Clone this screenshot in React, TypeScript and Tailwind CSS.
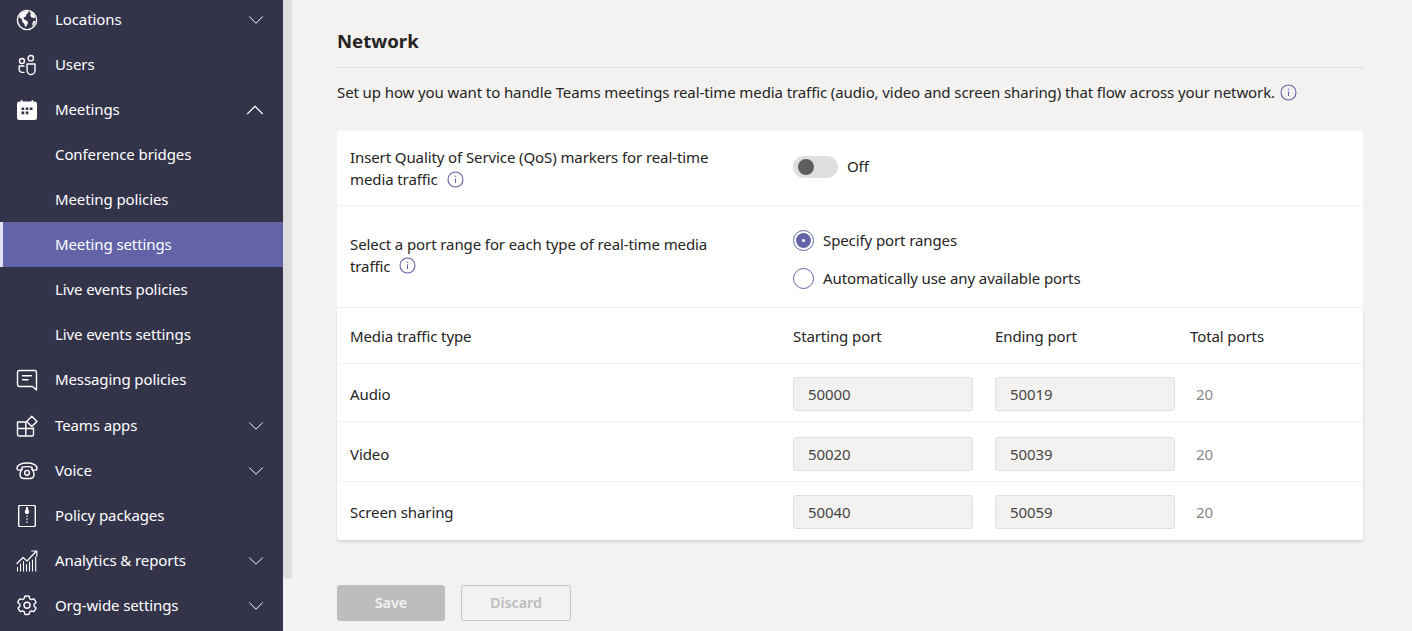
import { ChevronDown, ChevronUp } from 'lucide-react';
import type { ReactNode } from 'react';

const stroke = { fill: 'none', stroke: 'currentColor', strokeWidth: 1.4, strokeLinecap: 'round', strokeLinejoin: 'round' } as const;

function Svg({ children }: { children: ReactNode }) {
  return (
    <svg width="22" height="22" viewBox="0 0 22 22" className="text-white">
      {children}
    </svg>
  );
}

const GlobeIcon = () => (
  <Svg>
    <circle cx="11" cy="11" r="9.6" {...stroke} />
    <path fill="currentColor" d="M4 5.5c2-2.6 5-3.8 7.6-3.6l.8 1.6-2 1.9-.6 2.2-2.6 1.2 1.6 2.3 2.5.6.7 2.2-1.4 2.8-1.4 1.4-.8-3.2-2.2-2.2-.2-2.4L3 8.4Z" />
    <path fill="currentColor" d="M13.8 2.8c2.8.8 4.9 3 5.6 5.7l-1.8.6-2.4-.8-1-2.2.6-1.4Zm3.6 9.2 2-.2c-.4 2.4-1.6 4.2-3.2 5.4l.2-2.8Z" />
  </Svg>
);

const UsersIcon = () => (
  <Svg>
    <circle cx="14.8" cy="4.2" r="2.7" {...stroke} />
    <circle cx="6" cy="7" r="2.5" {...stroke} />
    <path {...stroke} d="M11 10h8v6.4a3.9 3.9 0 0 1-7.9.3Z" />
    <path {...stroke} d="M8 12H3.200v3.400a3 3 0 0 0 3 3H8" />
  </Svg>
);

const CalendarIcon = () => (
  <Svg>
    <path fill="currentColor" fillRule="evenodd" d="M3.500 2.500H5V1h1.400v1.500h9.200V1H17v1.500h1.500A2.500 2.500 0 0 1 21 5v13.500a2.500 2.500 0 0 1-2.500 2.500h-15A2.500 2.500 0 0 1 1 18.500V5a2.500 2.500 0 0 1 2.500-2.500ZM5.500 8.500v2.600h2.700V8.500Zm4.200 0v2.600h2.700V8.500Zm4.100 0v2.600h2.700V8.500ZM5.500 12.600v2.600h2.700v-2.600Zm4.200 0v2.600h2.700v-2.600Z" />
  </Svg>
);

const ChatIcon = () => (
  <Svg>
    <path {...stroke} d="M3.500 1.500h15a2 2 0 0 1 2 2v17.500l-4-3.500h-13a2 2 0 0 1-2-2v-12a2 2 0 0 1 2-2Z" />
    <path {...stroke} d="M6.500 6.800h9M6.500 10.800h5.500" />
  </Svg>
);

const AppsIcon = () => (
  <Svg>
    <path {...stroke} d="M1.500 7h8.300v14H3a1.500 1.500 0 0 1-1.500-1.500ZM1.500 13.500h16M9.800 21h6.200a1.500 1.500 0 0 0 1.500-1.500v-6.500" />
    <path {...stroke} d="M15.800 1.200 21 6.400l-5.200 5.200-5.200-5.200Z" />
  </Svg>
);

const PhoneIcon = () => (
  <Svg>
    <path {...stroke} d="M1 8.200C1 5 5.500 3 11 3s10 2 10 5.200c0 1.300-.7 1.900-1.700 1.900h-1.800c-1 0-1.600-.6-1.600-1.500V7.200c-1.500-.5-3.200-.6-4.900-.6s-3.400.1-4.900.6v1.400c0 .9-.6 1.500-1.600 1.500H2.700C1.700 10.100 1 9.500 1 8.200Z" />
    <path {...stroke} d="M6 9c-1.300 1.700-2 3.500-2 5.200C4 17 5.500 18.500 8 18.500h6c2.500 0 4-1.500 4-4.300 0-1.700-.7-3.500-2-5.200" />
    <circle cx="11" cy="12.800" r="2.400" {...stroke} />
  </Svg>
);

const PackageIcon = () => (
  <Svg>
    <rect x="2.700" y="0.200" width="16.600" height="21.600" rx="1.800" {...stroke} />
    <path fill="currentColor" d="M10 2h2v2.200c.8.800 1.200 1.600 1.200 2.500 0 1.400-.9 2.300-2.200 2.300s-2.200-.9-2.200-2.300c0-.9.400-1.700 1.200-2.500Z" />
    <path fill="currentColor" d="M10.300 10.500h1.400v1.300h-1.400zM10.300 13.500h1.400v1.300h-1.400zM10.300 16.500h1.400v1.300h-1.400z" />
  </Svg>
);

const AnalyticsIcon = () => (
  <Svg>
    <path {...stroke} strokeWidth={1.2} d="M1 13.500 7 7.500l4 3.500 9-9.500M15.800 1h5v5" />
    <path {...stroke} strokeWidth={1.1} d="M1.500 21v-3.500M4.500 21v-7M7.500 21v-9.500M10.500 21v-6.500M13.500 21v-9M16.500 21v-11M19.700 21V7" />
  </Svg>
);

const GearIcon = () => (
  <Svg>
    <path {...stroke} d="M8.800 1.200c1.500-.3 3-.3 4.400 0l.5 2.400 1.700 1 2.400-.8c1 1.100 1.700 2.300 2.200 3.700L18.100 9.200v2l1.900 1.700c-.5 1.400-1.200 2.600-2.200 3.700l-2.400-.8-1.700 1-.5 2.400c-1.400.4-2.900.4-4.400 0l-.5-2.400-1.700-1-2.400.8c-1-1.100-1.700-2.300-2.200-3.700l1.900-1.700v-2L1.800 7.500C2.300 6.100 3 4.900 4 3.800l2.400.8 1.700-1Z" />
    <circle cx="11" cy="10.200" r="3" {...stroke} />
  </Svg>
);

const InfoIcon = () => (
  <svg width="17" height="17" viewBox="0 0 17 17" className="shrink-0 text-[#6264a7]">
    <circle cx="8.500" cy="8.500" r="7.500" fill="none" stroke="currentColor" strokeWidth="1.100" />
    <path d="M8.500 7.500v4.500" stroke="currentColor" strokeWidth="1.100" />
    <circle cx="8.500" cy="5.300" r="0.800" fill="currentColor" />
  </svg>
);

type NavItem = { label: string; icon?: ReactNode; chevron?: 'up' | 'down'; active?: boolean; extra?: boolean };

const NAV: NavItem[] = [
  { label: 'Locations', icon: <GlobeIcon />, chevron: 'down' },
  { label: 'Users', icon: <UsersIcon /> },
  { label: 'Meetings', icon: <CalendarIcon />, chevron: 'up' },
  { label: 'Conference bridges' },
  { label: 'Meeting policies' },
  { label: 'Meeting settings', active: true },
  { label: 'Live events policies' },
  { label: 'Live events settings' },
  { label: 'Messaging policies', icon: <ChatIcon /> },
  { label: 'Teams apps', icon: <AppsIcon />, chevron: 'down', extra: true },
  { label: 'Voice', icon: <PhoneIcon />, chevron: 'down' },
  { label: 'Policy packages', icon: <PackageIcon /> },
  { label: 'Analytics & reports', icon: <AnalyticsIcon />, chevron: 'down' },
  { label: 'Org-wide settings', icon: <GearIcon />, chevron: 'down' },
];

const ROWS = [
  { type: 'Audio', start: '50000', end: '50019', height: 'h-[58px] pt-[3px]' },
  { type: 'Video', start: '50020', end: '50039', height: 'h-[60px] pt-[5px]' },
  { type: 'Screen sharing', start: '50040', end: '50059', height: 'h-[58px] pt-[2px]' },
];

function PortBox({ value }: { value: string }) {
  return (
    <div className="flex h-[34px] items-center rounded-[3px] border border-[#e1dfdd] bg-[#f3f2f1] pl-[14px] text-[#484644]">
      {value}
    </div>
  );
}

export default function App() {
  return (
    <div className="flex h-[631px] overflow-hidden bg-[#f3f2f1] font-['Noto_Sans',sans-serif] text-[15px] tracking-[-0.1px] text-[#252423]">
      {/* Sidebar */}
      <aside className="-mt-[3px] w-[283px] shrink-0 bg-[#33344a] text-white">
        {NAV.map((item) => (
          <div
            key={item.label}
            className={`relative flex h-[45px] items-center ${item.extra ? 'mt-[1px]' : ''} ${item.active ? 'bg-[#6264a7]' : ''}`}
          >
            {item.active && <span className="absolute inset-y-0 left-0 w-[3px] bg-[#e2e2f6]" />}
            <span className="flex w-[55px] shrink-0 justify-end pr-[17px]">{item.icon}</span>
            <span className="flex-1">{item.label}</span>
            {item.chevron === 'down' && <ChevronDown size={26} strokeWidth={0.9} className="mr-[14px]" />}
            {item.chevron === 'up' && <ChevronUp size={30} strokeWidth={0.9} className="mr-[13px]" />}
          </div>
        ))}
      </aside>

      {/* Scrollbar */}
      <div className="w-[9px] shrink-0">
        <div className="h-[579px] rounded-b-sm bg-[#dedede]" />
      </div>

      {/* Main */}
      <main className="w-[1071px] pl-[45px]">
        <div className="w-[1026px]">
          <h1 className="flex h-[68px] items-end border-b border-[#e1dfdd] pb-[13px] text-[18.6px] font-bold leading-[26px] tracking-normal">
            Network
          </h1>
          <p className="flex h-[63px] items-center gap-[5px] pb-[15px]">
            Set up how you want to handle Teams meetings real-time media traffic (audio, video and screen sharing) that flow across your network.
            <InfoIcon />
          </p>

          <section className="rounded-t-[3px] bg-white">
            <div className="flex h-[75px] items-center border-b border-[#f3f2f1] pl-[13px]">
              <div className="w-[443px] leading-[22px]">
                <div>Insert Quality of Service (QoS) markers for real-time</div>
                <div className="flex items-center gap-[9px]">
                  media traffic <InfoIcon />
                </div>
              </div>
              <div className="-mt-[3px] flex items-center gap-[9px]">
                <span className="flex h-[22px] w-[45px] items-center rounded-full bg-[#e1dfdd] pl-[5px]">
                  <span className="h-4 w-4 rounded-full bg-[#605e5c]" />
                </span>
                Off
              </div>
            </div>
            <div className="flex h-[101px] items-center pl-[13px]">
              <div className="-mt-[4px] w-[443px] leading-[22px]">
                <div>Select a port range for each type of real-time media</div>
                <div className="flex items-center gap-[9px]">
                  traffic <InfoIcon />
                </div>
              </div>
              <div className="mt-[6px] flex flex-col gap-[17px]">
                <label className="flex h-[21px] items-center gap-[9px]">
                  <span className="flex h-[21px] w-[21px] items-center justify-center rounded-full border border-[#6264a7] p-[2px]">
                    <span className="flex h-full w-full items-center justify-center rounded-full bg-[#6264a7]">
                      <span className="h-[3px] w-[3px] rounded-full bg-white" />
                    </span>
                  </span>
                  Specify port ranges
                </label>
                <label className="flex h-[21px] items-center gap-[9px]">
                  <span className="h-[21px] w-[21px] rounded-full border border-[#6264a7]" />
                  Automatically use any available ports
                </label>
              </div>
            </div>
          </section>

          <section className="mt-px rounded-b-[3px] bg-white shadow-[0_2px_3px_rgba(0,0,0,0.12)]">
            <div className="flex h-[56px] items-center border-b border-[#f3f2f1] pl-[13px] pt-[2px]">
              <div className="w-[443px]">Media traffic type</div>
              <div className="w-[202px]">Starting port</div>
              <div className="w-[195px]">Ending port</div>
              <div>Total ports</div>
            </div>
            {ROWS.map((row, i) => (
              <div
                key={row.type}
                className={`flex items-center pl-[13px] ${row.height} ${i < ROWS.length - 1 ? 'border-b border-[#f3f2f1]' : ''}`}
              >
                <div className="w-[443px]">{row.type}</div>
                <div className="w-[180px]"><PortBox value={row.start} /></div>
                <div className="ml-[22px] w-[180px]"><PortBox value={row.end} /></div>
                <div className="ml-[21px] text-[#8a8886]">20</div>
              </div>
            ))}
          </section>

          <div className="mt-[45px] flex gap-4 text-[14.5px]">
            <button className="h-9 w-[108px] rounded-[3px] bg-[#bdbdbd] font-semibold text-[#f3f2f1]">Save</button>
            <button className="h-9 w-[110px] rounded-[3px] border border-[#c8c6c4] font-semibold text-[#bdbdbd]">Discard</button>
          </div>
        </div>
      </main>
    </div>
  );
}
